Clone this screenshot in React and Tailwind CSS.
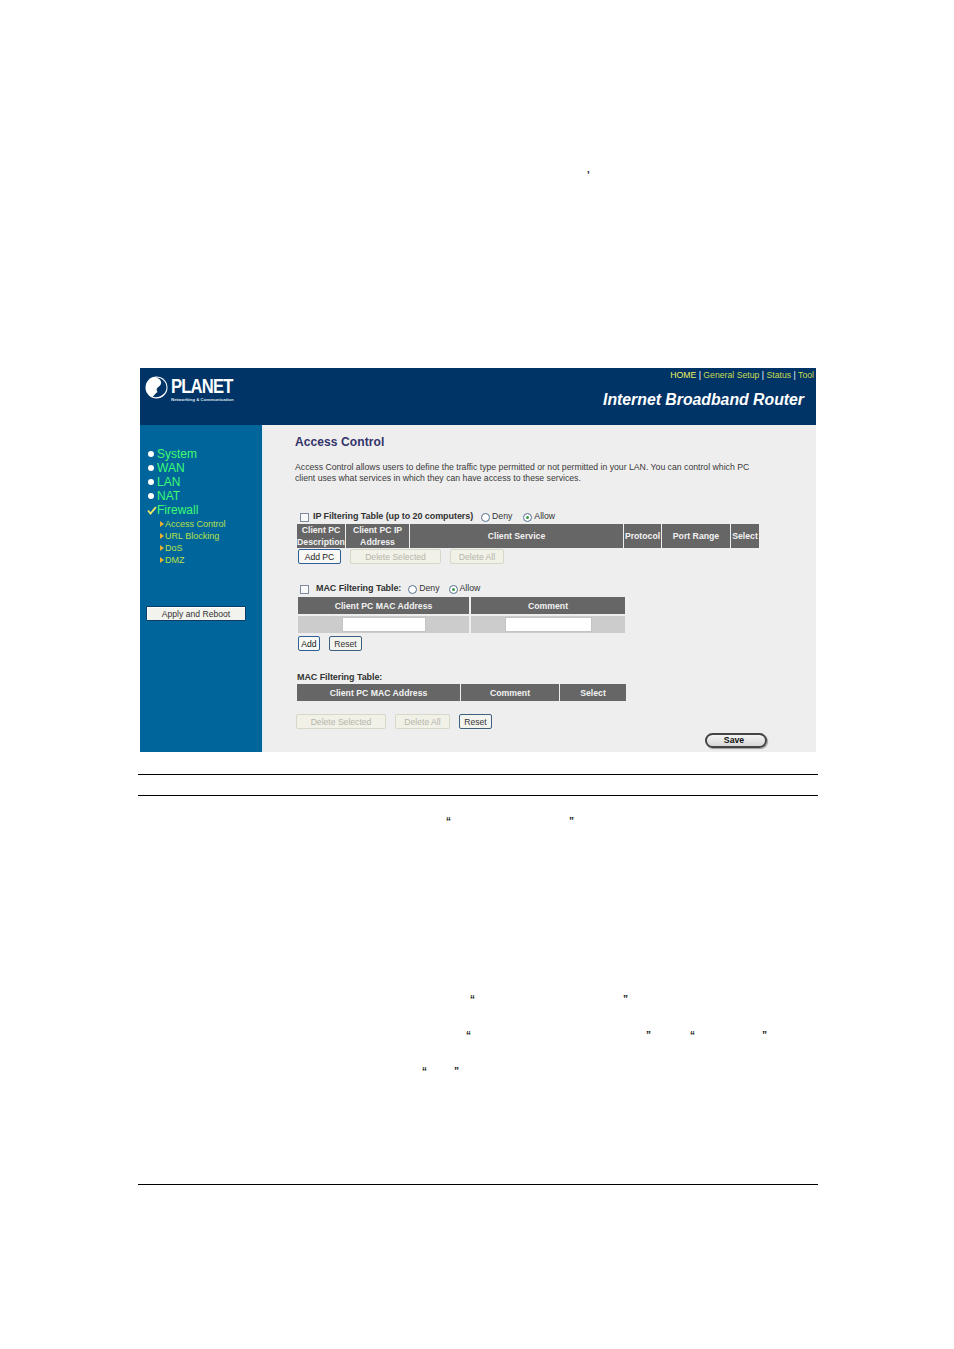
const sans = "font-['Liberation_Sans',Arial,sans-serif]";

const menu = ['System', 'WAN', 'LAN', 'NAT'];
const subMenu = ['Access Control', 'URL Blocking', 'DoS', 'DMZ'];

function Btn({ children, width, disabled, focused }) {
  const tone = disabled
    ? 'border-[#d8d8c8] text-[#b5b5a8] bg-[#f1f1e8]'
    : focused
      ? 'border-[#2c5f9a] text-[#222] bg-[#f8f8f4]'
      : 'border-[#3d5f80] text-[#333] bg-[#f4f4ee]';
  return (
    <button type="button" className={`h-[15px] shrink-0 rounded-[2px] border text-center text-[8.6px] leading-[12px] ${width} ${tone}`}>
      {children}
    </button>
  );
}

function Check() {
  return <span className="block size-[9px] shrink-0 border border-[#7f8c9f] bg-[#f8f8f8]" />;
}

function Radio({ on }) {
  return (
    <span className="flex size-[9px] shrink-0 items-center justify-center rounded-full border border-[#55708f] bg-white">
      {on && <span className="size-[3px] rounded-full bg-[#3c9a4c]" />}
    </span>
  );
}

function Head({ children, className = '' }) {
  return (
    <div className={`flex items-center justify-center bg-[#666666] text-center text-[8.7px] font-bold leading-[12px] text-[#f2f2f2] ${className}`}>
      {children}
    </div>
  );
}

function QuoteRow({ marks, className }) {
  return (
    <div className={`relative h-[10px] text-[10px] font-bold leading-[10px] text-[#222] ${className}`}>
      {marks.map(([left, mark]) => (
        <span key={left} className="absolute top-0" style={{ left }}>{mark}</span>
      ))}
    </div>
  );
}

function Logo() {
  return (
    <div className="flex items-start gap-[3px]">
      <svg width="23" height="23" viewBox="0 0 23 23" className="shrink-0">
        <circle cx="11.5" cy="11.5" r="11" fill="#fff" />
        <path d="M11 1.6 C17 3.5 17.5 8 14 10.5 C11.5 12 11 14 12.5 16 C10 17.5 9.5 19.5 7.5 20.6 C14 23 21.4 18 21.5 11.5 C21.5 6 17 1.5 11 1.6Z" fill="#003366" />
      </svg>
      <div className="text-white">
        <div className="h-[19px] origin-left scale-x-[0.79] whitespace-nowrap text-[21px] font-bold leading-[19px] tracking-[-1px]">PLANET</div>
        <div className="mt-[2px] whitespace-nowrap text-[4.4px] font-bold leading-[5px] text-[#dfe7ef]">Networking &amp; Communication</div>
      </div>
    </div>
  );
}

function Sidebar() {
  return (
    <aside className="flex w-[122px] shrink-0 flex-col bg-[#00659a] pl-[7px] pt-[22px]">
      {menu.map((item) => (
        <div key={item} className="flex h-[14px] items-center text-[12px] leading-[14px] text-[#3dfb72]">
          <span className="ml-[1px] mr-[3px] size-[6px] rounded-full bg-white" />
          {item}
        </div>
      ))}
      <div className="flex h-[14px] items-center text-[12px] leading-[14px] text-[#3dfb72]">
        <svg width="10" height="9" viewBox="0 0 10 9">
          <path d="M1 4.5 L3.5 7.5 L9 1" fill="none" stroke="#f0e868" strokeWidth="1.8" />
        </svg>
        Firewall
      </div>
      <div className="mt-[1px] pl-[13px]">
        {subMenu.map((item) => (
          <div key={item} className="flex h-[12px] items-center text-[9px] leading-[12px] text-[#b8e04a]">
            <span className="mr-[1px] h-0 w-0 border-y-[3px] border-l-[4px] border-y-transparent border-l-[#e8b030]" />
            {item}
          </div>
        ))}
      </div>
      <button type="button" className="mt-[40px] h-[15px] w-[100px] -translate-x-[1px] rounded-[1px] border border-[#0d3d66] bg-[#f3f3ee] text-[8.6px] leading-[12px] text-[#333] shadow-[inset_1px_1px_0_#fff]">
        Apply and Reboot
      </button>
    </aside>
  );
}

function Main() {
  return (
    <main className="flex-1 border-l border-[#dcecf8] bg-[#eeeeee] pl-[32px] text-[#333]">
      <h1 className="mt-[10px] text-[12px] font-bold leading-[15px] tracking-[0.1px] text-[#33336b]">Access Control</h1>
      <p className="mt-[12px] w-[470px] text-[8.7px] leading-[11px] text-[#3a3a3a]">
        Access Control allows users to define the traffic type permitted or not permitted in your LAN. You can control which PC client uses what services in which they can have access to these services.
      </p>

      <div className="ml-[5px] mt-[27px] flex h-[12px] items-center text-[8.7px]">
        <Check />
        <span className="ml-[4px] text-[9px] font-bold tracking-[-0.08px]">IP Filtering Table (up to 20 computers)</span>
        <span className="ml-[8px]"><Radio /></span>
        <span className="ml-[2px]">Deny</span>
        <span className="ml-[11px]"><Radio on /></span>
        <span className="ml-[2px]">Allow</span>
      </div>
      <div className="ml-[2px] mt-[1px] grid h-[23px] w-[462px] grid-cols-[48px_63px_213px_37px_68px_28px] gap-x-[1px]">
        <Head>Client PC Description</Head>
        <Head>Client PC IP Address</Head>
        <Head>Client Service</Head>
        <Head>Protocol</Head>
        <Head>Port Range</Head>
        <Head>Select</Head>
      </div>
      <div className="ml-[3px] mt-[2px] flex gap-[9px]">
        <Btn width="w-[43px]" focused>Add PC</Btn>
        <Btn width="w-[91px]" disabled>Delete Selected</Btn>
        <Btn width="w-[54px]" disabled>Delete All</Btn>
      </div>

      <div className="ml-[5px] mt-[19px] flex h-[12px] items-center text-[8.7px]">
        <Check />
        <span className="ml-[7px] text-[9px] font-bold tracking-[-0.08px]">MAC Filtering Table:</span>
        <span className="ml-[7px]"><Radio /></span>
        <span className="ml-[2px]">Deny</span>
        <span className="ml-[9px]"><Radio on /></span>
        <span className="ml-[2px]">Allow</span>
      </div>
      <div className="ml-[3px] mt-[2px] grid w-[327px] grid-cols-[171px_154px] gap-x-[2px] gap-y-[2px]">
        <Head className="h-[17px]">Client PC MAC Address</Head>
        <Head className="h-[17px]">Comment</Head>
        <div className="flex h-[17px] items-center justify-center bg-[#cccccc]">
          <input readOnly className="h-[15px] w-[84px] border border-[#c4c4c4] bg-white" />
        </div>
        <div className="flex h-[17px] items-center justify-center bg-[#cccccc]">
          <input readOnly className="h-[15px] w-[87px] border border-[#c4c4c4] bg-white" />
        </div>
      </div>
      <div className="ml-[3px] mt-[3px] flex gap-[9px]">
        <Btn width="w-[22px]" focused>Add</Btn>
        <Btn width="w-[33px]">Reset</Btn>
      </div>

      <div className="ml-[2px] mt-[20px] text-[9px] font-bold leading-[12px] tracking-[-0.08px]">MAC Filtering Table:</div>
      <div className="ml-[2px] mt-[1px] grid h-[17px] w-[329px] grid-cols-[163px_98px_66px] gap-x-[1px]">
        <Head>Client PC MAC Address</Head>
        <Head>Comment</Head>
        <Head>Select</Head>
      </div>
      <div className="ml-[1px] mt-[13px] flex gap-[9px]">
        <Btn width="w-[90px]" disabled>Delete Selected</Btn>
        <Btn width="w-[55px]" disabled>Delete All</Btn>
        <Btn width="w-[33px]">Reset</Btn>
      </div>
      <div className="ml-[410px] mt-[4px] flex h-[15px] w-[62px] items-center justify-center rounded-full border-2 border-[#444] bg-gradient-to-b from-[#f4f4f4] to-[#d8d8d8] pr-[4px] text-[8.7px] font-bold text-[#111] shadow-[1px_1px_1px_#999]">
        Save
      </div>
    </main>
  );
}

export default function App() {
  return (
    <div className={`h-[1349px] w-[954px] overflow-hidden bg-white ${sans}`}>
      <QuoteRow className="mt-[171px]" marks={[[587, '’']]} />
      <div className="ml-[140px] mt-[187px] flex h-[384px] w-[676px] flex-col">
        <header className="flex h-[57px] shrink-0 justify-between bg-[#003366] pl-[5px] pt-[8px]">
          <Logo />
          <div className="-mt-[7px] flex flex-col items-end">
            <div className="whitespace-nowrap pr-[2px] text-[8.7px] leading-[12px] text-[#c8dc50]">
              <span className="text-[#f0f060]">HOME</span> <span className="text-white">|</span> General Setup <span className="text-white">|</span> Status <span className="text-white">|</span> Tool
            </div>
            <div className="mr-[12px] mt-[10px] text-[15.8px] font-bold italic leading-[18px] text-white">Internet Broadband Router</div>
          </div>
        </header>
        <div className="flex flex-1">
          <Sidebar />
          <Main />
        </div>
      </div>
      <div className="ml-[138px] mt-[22px] box-content h-[20px] w-[680px] border-y border-black" />
      <QuoteRow className="mt-[21px]" marks={[[446, '“'], [569, '”']]} />
      <QuoteRow className="mt-[168px]" marks={[[470, '“'], [623, '”']]} />
      <QuoteRow className="mt-[26px]" marks={[[466, '“'], [646, '”'], [690, '“'], [762, '”']]} />
      <QuoteRow className="mt-[26px]" marks={[[422, '“'], [454, '”']]} />
      <div className="ml-[138px] mt-[107px] h-px w-[680px] bg-black" />
    </div>
  );
}
